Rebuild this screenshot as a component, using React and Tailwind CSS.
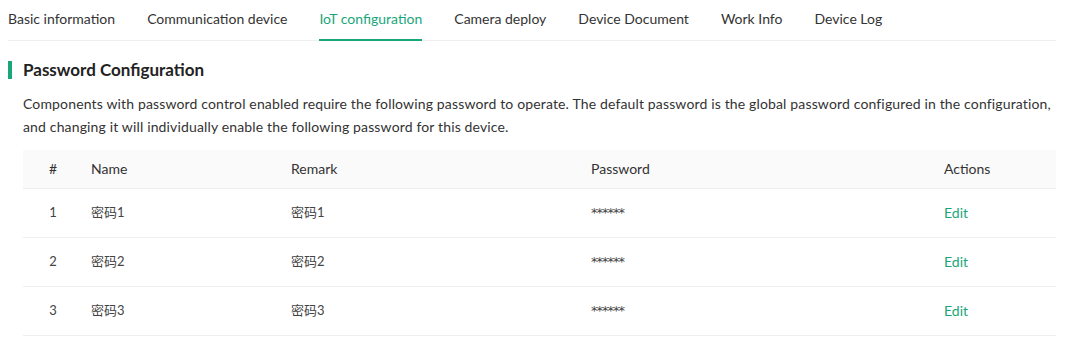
export default function App() {
  const tabs = [
    "Basic information",
    "Communication device",
    "IoT configuration",
    "Camera deploy",
    "Device Document",
    "Work Info",
    "Device Log",
  ];
  const active = "IoT configuration";

  const rows = [
    { id: 1, name: "密码1", remark: "密码1" },
    { id: 2, name: "密码2", remark: "密码2" },
    { id: 3, name: "密码3", remark: "密码3" },
  ];

  return (
    <div className="w-[1072px] h-[350px] bg-white text-[#333] font-['Lato','Noto_Sans_CJK_SC',sans-serif] pl-2 pr-4">
      {/* TABS */}
      <div className="flex gap-8 border-b border-[#efefef] h-[41px]">
        {tabs.map((t) => (
          <div
            key={t}
            className={
              t === active
                ? "text-[14px] text-[#1aa67b] border-b-2 border-[#1aa67b] pt-[8px] -mb-px"
                : "text-[14px] text-[#333] pt-[8px]"
            }
          >
            {t}
          </div>
        ))}
      </div>

      {/* HEADING */}
      <div className="flex items-center mt-[20px] h-[18px]">
        <div className="w-1 h-[18px] bg-[#1aa67b]" />
        <h2 className="ml-[11px] text-[17px] font-bold text-[#222]">Password Configuration</h2>
      </div>

      <div className="pl-[15px]">
        <p className="mt-[13px] text-[14px] tracking-[0.15px] leading-[23px] text-[#333]">
          Components with password control enabled require the following password to operate. The default password is the global password configured in the configuration, and changing it will individually enable the following password for this device.
        </p>

        {/* TABLE */}
        <table className="mt-[12px] w-[1033px] text-[14px] border-collapse">
          <thead>
            <tr className="bg-[#fafafa] h-[38px] border-b border-[#efefef] text-[#333]">
              <th className="w-[52px] font-normal text-center pl-[8px]">#</th>
              <th className="w-[200px] font-normal text-left pl-4">Name</th>
              <th className="w-[300px] font-normal text-left pl-4">Remark</th>
              <th className="w-[353px] font-normal text-left pl-4">Password</th>
              <th className="font-normal text-left pl-4">Actions</th>
            </tr>
          </thead>
          <tbody>
            {rows.map((r) => (
              <tr key={r.id} className="h-[49px] border-b border-[#efefef] text-[#444]">
                <td className="text-center pl-[8px] text-[13px]">{r.id}</td>
                <td className="pl-4 text-[13px]">{r.name}</td>
                <td className="pl-4 text-[13px]">{r.remark}</td>
                <td className="pl-4 text-[13px] font-['DejaVu_Sans',sans-serif] tracking-[-1px]">******</td>
                <td className="pl-4 text-[#1aa67b]">Edit</td>
              </tr>
            ))}
          </tbody>
        </table>
      </div>
    </div>
  );
}
